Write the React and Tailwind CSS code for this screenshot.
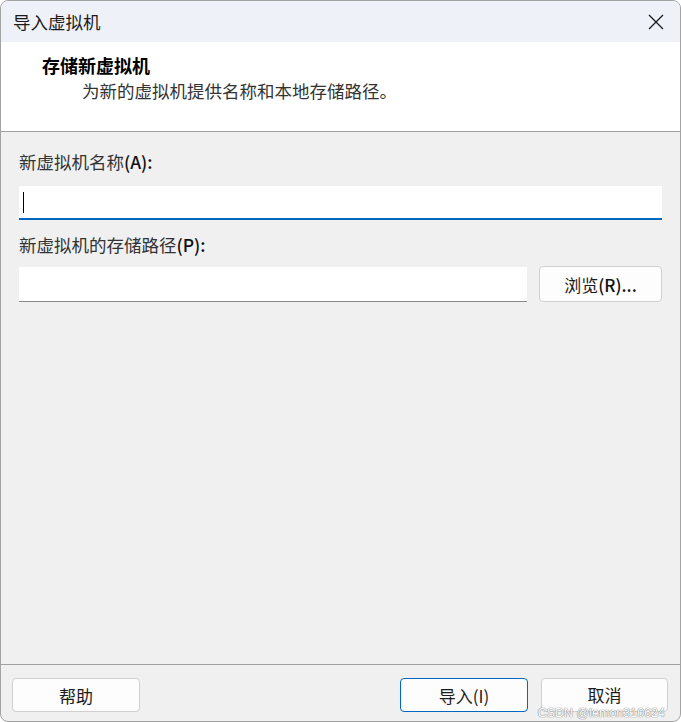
import React from "react";

const font = { fontFamily: '"Noto Sans CJK SC", "Noto Sans", sans-serif' };

export default function App() {
  return (
    <div className="w-[681px] h-[722px] bg-white" style={font}>
      <div className="relative w-[681px] h-[722px] flex flex-col overflow-hidden rounded-[8px] border border-[#a3a3a3] bg-[#f0f0f0] text-[#1b1b1b]">
        {/* Title bar */}
        <div className="h-[41px] shrink-0 flex items-center justify-between bg-[#eff1f8] pl-[12px] pr-[16px]">
          <span className="text-[17.5px] leading-none">导入虚拟机</span>
          <svg width="16" height="16" viewBox="0 0 16 16">
            <path d="M1 1 L15 15 M15 1 L1 15" stroke="#1a1a1a" strokeWidth="1.3" fill="none" />
          </svg>
        </div>
        {/* Header */}
        <div className="h-[90px] shrink-0 bg-white border-b border-[#a0a0a0] flex flex-col pt-[12px]">
          <div className="pl-[41px] text-[18px] font-bold leading-[22px] text-black">存储新虚拟机</div>
          <div className="pl-[81px] mt-[4px] text-[17.5px] leading-[22px] text-[#333]">
            为新的虚拟机提供名称和本地存储路径。
          </div>
        </div>
        {/* Body */}
        <div className="flex-1 flex flex-col px-[18px] pt-[19px]">
          <div className="text-[17.5px] leading-[22px] text-[#333]">
            新虚拟机名称<span className="font-medium text-[#111]">(A):</span>
          </div>
          <div className="mt-[13px] h-[34px] bg-white border-b-2 border-[#0067c0] flex items-center pl-[4px]">
            <div className="w-[1px] h-[21px] bg-black" />
          </div>
          <div className="mt-[14px] text-[17.5px] leading-[22px] text-[#333]">
            新虚拟机的存储路径<span className="font-medium text-[#111]">(P):</span>
          </div>
          <div className="mt-[11px] flex items-start gap-[12px]">
            <div className="flex-1 h-[35px] bg-white border-b border-[#8a8a8a]" />
            <button className="w-[123px] h-[36px] -mt-[1px] rounded-[4px] border border-[#d0d0d0] bg-[#fdfdfd] text-[17px] leading-none text-[#1b1b1b] flex items-center justify-center">
              浏览<span className="font-medium text-[#111]">(R)...</span>
            </button>
          </div>
        </div>
        {/* Footer */}
        <div className="h-[57px] shrink-0 border-t border-[#a0a0a0] flex items-start pt-[13px] pl-[11px] pr-[12px]">
          <button className="w-[128px] h-[34px] rounded-[4px] border border-[#d0d0d0] bg-[#fdfdfd] text-[17px] leading-none flex items-center justify-center">
            帮助
          </button>
          <div className="flex-1" />
          <button className="w-[128px] h-[34px] rounded-[4px] border border-[#0067c0] bg-[#fdfdfd] text-[17px] leading-none flex items-center justify-center">
            导入(I)
          </button>
          <button className="ml-[13px] w-[127px] h-[34px] rounded-[4px] border border-[#d0d0d0] bg-[#fdfdfd] text-[17px] leading-none flex items-center justify-center pb-[2px]">
            取消
          </button>
        </div>
        <div
          className="absolute right-[15px] bottom-[2px] text-[12.5px] leading-none text-white"
          style={{ fontFamily: '"Liberation Sans", sans-serif', textShadow: "0 0 1px #777, 0 0 1px #777" }}
        >
          CSDN @lemon310624
        </div>
      </div>
    </div>
  );
}
